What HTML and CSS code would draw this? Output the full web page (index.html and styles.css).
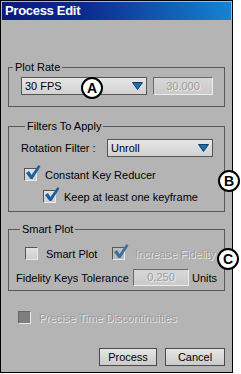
FILE: index.html
```html
<!DOCTYPE html>
<html lang="en">
<head>
    <meta charset="UTF-8">
    <title>Process Edit</title>
    <link rel="stylesheet" href="styles.css">
</head>
<body>
    <div class="window">
        <div class="titlebar">Process Edit</div>

        <div class="content">
            <fieldset class="group group-plot">
                <legend>Plot Rate</legend>
                <div class="plot-row">
                    <div class="combo combo-fps">
                        <span>30 FPS</span>
                        <svg class="arrow" width="11" height="8" viewBox="0 0 11 8"><path d="M0.5 0.5 H10.5 L5.5 7.5 Z" fill="#1f6eaa" stroke="#0e3f68"/></svg>
                    </div>
                    <div class="field field-rate">30.000</div>
                </div>
            </fieldset>

            <fieldset class="group group-filters">
                <legend>Filters To Apply</legend>
                <div class="filter-row">
                    <span class="filter-label">Rotation Filter :</span>
                    <div class="combo combo-unroll">
                        <span>Unroll</span>
                        <svg class="arrow" width="11" height="8" viewBox="0 0 11 8"><path d="M0.5 0.5 H10.5 L5.5 7.5 Z" fill="#1f6eaa" stroke="#0e3f68"/></svg>
                    </div>
                </div>
                <div class="check-row check-ckr">
                    <span class="box"><svg class="tick" width="16" height="17" viewBox="0 0 16 17"><path d="M1 9 L4 7 L6.5 11 L13.5 1 L15.5 2.5 L7.5 15 L5.5 15 Z" fill="#1d5f9c"/></svg></span>
                    <span>Constant Key Reducer</span>
                </div>
                <div class="check-row check-keep">
                    <span class="box"><svg class="tick" width="16" height="17" viewBox="0 0 16 17"><path d="M1 9 L4 7 L6.5 11 L13.5 1 L15.5 2.5 L7.5 15 L5.5 15 Z" fill="#1d5f9c"/></svg></span>
                    <span>Keep at least one keyframe</span>
                </div>
            </fieldset>

            <fieldset class="group group-smart">
                <legend>Smart Plot</legend>
                <div class="smart-row">
                    <div class="check-row check-smart">
                        <span class="box"></span>
                        <span>Smart Plot</span>
                    </div>
                    <div class="check-row check-fidelity">
                        <span class="box box-off"><svg class="tick" width="16" height="17" viewBox="0 0 16 17"><path d="M1 9 L4 7 L6.5 11 L13.5 1 L15.5 2.5 L7.5 15 L5.5 15 Z" fill="#3f6f98"/></svg></span>
                        <span class="disabled">Increase Fidelity</span>
                    </div>
                </div>
                <div class="tolerance-row">
                    <span class="tolerance-label">Fidelity Keys Tolerance</span>
                    <div class="field field-tol">0.250</div>
                    <span>Units</span>
                </div>
            </fieldset>

            <div class="check-row check-precise">
                <span class="box box-dark"></span>
                <span class="disabled">Precise Time Discontinuities</span>
            </div>

            <div class="buttons">
                <button class="btn btn-process">Process</button>
                <button class="btn btn-cancel">Cancel</button>
            </div>
        </div>

        <span class="callout callout-a">A</span>
        <span class="callout callout-b">B</span>
        <span class="callout callout-c">C</span>
    </div>
</body>
</html>
```

FILE: styles.css
```css
body {
    margin: 0;
    background-color: #fff;
    font-family: "Liberation Sans", Arial, sans-serif;
    font-size: 11px;
    color: #000;
    white-space: nowrap;
}

.window {
    position: relative;
    width: 233px;
    height: 373px;
    box-sizing: border-box;
    border: 1px solid #000;
    padding: 1px;
    background-color: #b4b4b4;
}

.titlebar {
    height: 18px;
    line-height: 18px;
    padding-left: 3px;
    color: #fff;
    font-size: 13px;
    font-weight: bold;
    letter-spacing: -0.3px;
    background: linear-gradient(to right, #0a1a7c 0%, #0b2a8e 35%, #1683d0 100%);
}

.content {
    padding: 0 6px;
}

.group {
    margin: 0;
    padding: 0;
    min-width: 0;
    border: 1px solid #585858;
}

.group legend {
    margin-left: 4px;
    padding: 0 2px;
    line-height: 13px;
}

.group-plot {
    margin-top: 41px;
}

.plot-row {
    display: flex;
    gap: 6px;
    padding: 3px 11px 11px 12px;
}

.combo {
    display: flex;
    align-items: center;
    justify-content: space-between;
    height: 18px;
    box-sizing: border-box;
    padding: 0 3px;
    border: 1px solid #555;
    background: linear-gradient(#e6e6e6, #d2d2d2);
}

.combo-fps {
    width: 126px;
}

.combo-unroll {
    width: 106px;
}

.field {
    height: 18px;
    line-height: 16px;
    box-sizing: border-box;
    border: 1px solid;
    border-color: #6a6a6a #ececec #ececec #6a6a6a;
    background: linear-gradient(#d8d8d8, #cacaca);
    text-align: center;
    color: #9c9c9c;
    text-shadow: 1px 1px 0 #ececec;
}

.field-rate {
    width: 60px;
}

.field-tol {
    width: 56px;
    height: 17px;
    line-height: 15px;
    margin-right: 3px;
    flex-shrink: 0;
}

.group-filters {
    margin-top: 13px;
    padding: 6px 11px 8px 12px;
}

.filter-row {
    display: flex;
    align-items: center;
}

.filter-label {
    width: 86px;
}

.check-row {
    display: flex;
    align-items: center;
    gap: 8px;
    height: 13px;
}

.box {
    position: relative;
    width: 13px;
    height: 13px;
    box-sizing: border-box;
    border: 1px solid;
    border-color: #555 #e8e8e8 #e8e8e8 #555;
    background: linear-gradient(#e2e2e2, #cfcfcf);
    flex-shrink: 0;
}

.box-off {
    background: #bcbcbc;
}

.box-dark {
    background: #7e7e7e;
    border-color: #666 #e8e8e8 #e8e8e8 #666;
}

.tick {
    position: absolute;
    left: 0;
    top: -5px;
}

.check-ckr {
    margin: 11px 0 0 3px;
}

.check-keep {
    margin: 9px 0 0 22px;
}

.disabled {
    color: #9a9a9a;
    text-shadow: 1px 1px 0 #e6e6e6;
}

.group-smart {
    margin-top: 11px;
    padding: 11px 6px 4px 7px;
}

.smart-row {
    display: flex;
    margin-left: 9px;
}

.check-smart {
    width: 87px;
    flex-shrink: 0;
}

.check-fidelity {
    gap: 10px;
}

.tolerance-row {
    display: flex;
    align-items: center;
    margin-top: 9px;
}

.tolerance-label {
    width: 117px;
    flex-shrink: 0;
}

.check-precise {
    margin: 20px 0 0 10px;
}

.buttons {
    display: flex;
    justify-content: flex-end;
    gap: 8px;
    margin-top: 24px;
}

.btn {
    height: 18px;
    padding: 0;
    border: 1px solid #4a4a4a;
    background: linear-gradient(#e6e6e6, #cbcbcb);
    font-family: inherit;
    font-size: 11px;
    color: #000;
}

.btn-process {
    width: 58px;
}

.btn-cancel {
    width: 60px;
}

.callout {
    position: absolute;
    width: 22px;
    height: 22px;
    box-sizing: border-box;
    border: 2px solid #000;
    border-radius: 50%;
    background-color: #fff;
    font-size: 14px;
    font-weight: bold;
    line-height: 18px;
    text-align: center;
}

.callout-a {
    left: 80px;
    top: 76px;
}

.callout-b {
    left: 217px;
    top: 169px;
}

.callout-c {
    left: 216px;
    top: 247px;
}
```
